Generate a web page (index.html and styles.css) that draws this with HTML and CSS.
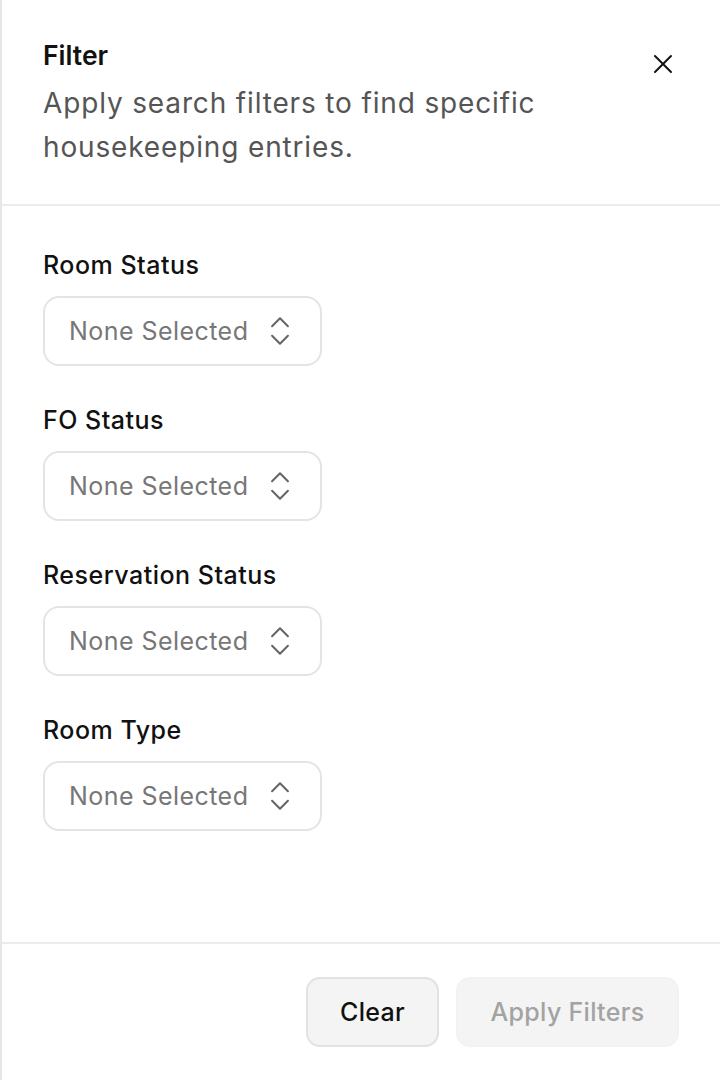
FILE: index.html
```html
<!DOCTYPE html>
<html lang="en">
<head>
<meta charset="utf-8">
<link rel="stylesheet" href="styles.css">
</head>
<body>
<div class="panel">
  <header class="panel-header">
    <h1 class="title">Filter</h1>
    <p class="desc">Apply search filters to find specific housekeeping entries.</p>
    <button class="close" aria-label="Close">
      <svg width="32" height="32" viewBox="0 0 24 24" fill="none" stroke="#111" stroke-width="1.5" stroke-linecap="round" stroke-linejoin="round"><path d="M18 6 6 18"/><path d="m6 6 12 12"/></svg>
    </button>
  </header>
  <main class="panel-body">
    <div class="field">
      <label class="label">Room Status</label>
      <div class="select"><span>None Selected</span><svg class="chev" width="38" height="38" viewBox="0 0 24 24" fill="none" stroke="#666" stroke-width="1.3" stroke-linecap="round" stroke-linejoin="round"><path d="m7 15 5 5 5-5"/><path d="m7 9 5-5 5 5"/></svg></div>
    </div>
    <div class="field">
      <label class="label">FO Status</label>
      <div class="select"><span>None Selected</span><svg class="chev" width="38" height="38" viewBox="0 0 24 24" fill="none" stroke="#666" stroke-width="1.3" stroke-linecap="round" stroke-linejoin="round"><path d="m7 15 5 5 5-5"/><path d="m7 9 5-5 5 5"/></svg></div>
    </div>
    <div class="field">
      <label class="label">Reservation Status</label>
      <div class="select"><span>None Selected</span><svg class="chev" width="38" height="38" viewBox="0 0 24 24" fill="none" stroke="#666" stroke-width="1.3" stroke-linecap="round" stroke-linejoin="round"><path d="m7 15 5 5 5-5"/><path d="m7 9 5-5 5 5"/></svg></div>
    </div>
    <div class="field">
      <label class="label">Room Type</label>
      <div class="select"><span>None Selected</span><svg class="chev" width="38" height="38" viewBox="0 0 24 24" fill="none" stroke="#666" stroke-width="1.3" stroke-linecap="round" stroke-linejoin="round"><path d="m7 15 5 5 5-5"/><path d="m7 9 5-5 5 5"/></svg></div>
    </div>
  </main>
  <footer class="panel-footer">
    <button class="btn btn-clear">Clear</button>
    <button class="btn btn-apply">Apply Filters</button>
  </footer>
</div>
</body>
</html>
```
FILE: styles.css
```css
* { box-sizing: border-box; }
html, body { margin: 0; padding: 0; background: #fff; }
body { font-family: Inter, "Noto Sans", sans-serif; color: #111; }

.panel {
  height: 1080px;
  border-left: 2px solid #e6e6e6;
  display: flex;
  flex-direction: column;
}

.panel-header {
  position: relative;
  padding: 39px 42px 35px 41px;
  border-bottom: 2px solid #ececec;
}
.title {
  margin: 0;
  font-size: 26.5px;
  line-height: 32px;
  font-weight: 600;
  color: #111;
}
.desc {
  margin: 10px 0 0;
  font-size: 28px;
  line-height: 44px;
  font-weight: 400;
  letter-spacing: 0.85px;
  color: #555;
  max-width: 560px;
}
.close {
  position: absolute;
  top: 48px;
  right: 41px;
  width: 32px;
  height: 32px;
  padding: 0;
  border: 0;
  background: none;
  display: flex;
}

.panel-body {
  flex: 1;
  padding: 43px 41px 0;
  display: flex;
  flex-direction: column;
  gap: 38px;
}
.field { display: flex; flex-direction: column; gap: 15px; }
.label {
  font-size: 25px;
  line-height: 32px;
  font-weight: 500;
  letter-spacing: 0.5px;
  color: #111;
}
.select {
  width: 279px;
  height: 70px;
  border: 2px solid #e4e4e4;
  border-radius: 16px;
  display: flex;
  align-items: center;
  padding-left: 24px;
  font-size: 25px;
  letter-spacing: 0.45px;
  color: #777;
}
.chev { margin-left: 13px; }

.panel-footer {
  border-top: 2px solid #ececec;
  padding: 33px 41px 33px 0;
  display: flex;
  justify-content: flex-end;
  gap: 17px;
}
.btn {
  height: 70px;
  border-radius: 14px;
  font-family: Inter, "Noto Sans", sans-serif;
  font-size: 25px;
  font-weight: 500;
  letter-spacing: 0.3px;
  background: #f4f4f4;
}
.btn-clear {
  width: 133px;
  border: 2px solid #e2e2e2;
  color: #111;
}
.btn-apply {
  width: 223px;
  border: 2px solid #f2f2f2;
  color: #a3a3a3;
}
```
